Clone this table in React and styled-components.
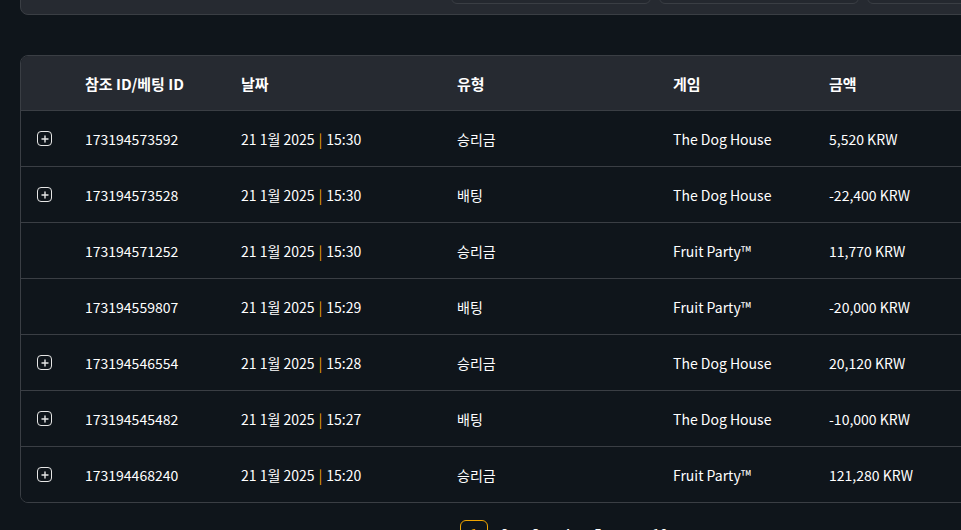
import React from 'react';
import styled, { createGlobalStyle } from 'styled-components';

const colors = {
  page: '#0f151b',
  panel: '#262a31',
  line: '#3a3e44',
  text: '#ffffff',
  accent: '#f0a500',
};

const GlobalStyle = createGlobalStyle`
  html, body {
    margin: 0;
    padding: 0;
    background: ${colors.page};
    overflow: hidden;
  }
  body {
    font-family: 'Noto Sans CJK KR', 'Noto Sans', sans-serif;
    color: ${colors.text};
  }
`;

const Page = styled.div`
  padding-left: 20px;
  width: 1160px;
`;

const FilterPanel = styled.div`
  margin-top: -69px;
  height: 84px;
  box-sizing: border-box;
  background: ${colors.panel};
  border: 1px solid ${colors.line};
  border-radius: 8px;
  display: flex;
  align-items: flex-end;
  padding: 0 0 10px 430px;
  gap: 8px;
`;

const FilterInput = styled.div`
  width: 200px;
  height: 40px;
  box-sizing: border-box;
  border: 1px solid ${colors.line};
  border-radius: 6px;
  background: #24282f;
`;

const Table = styled.div`
  margin-top: 40px;
  border: 1px solid ${colors.line};
  border-radius: 8px;
  overflow: hidden;
`;

const Row = styled.div`
  display: grid;
  grid-template-columns: 64px 156px 216px 216px 156px 1fr;
  align-items: center;
  height: ${p => (p.$head ? '54px' : '55px')};
  background: ${p => (p.$head ? colors.panel : colors.page)};
  border-bottom: 1px solid ${colors.line};
  font-size: ${p => (p.$head ? '15px' : '14px')};
  font-weight: ${p => (p.$head ? 700 : 400)};

  &:last-child {
    border-bottom: none;
  }
`;

const Cell = styled.div`
  white-space: nowrap;
  line-height: 20px;
  padding-top: 1px;
`;

const IconCell = styled.div`
  padding-left: 16px;
  display: flex;
  align-items: center;
`;

const ExpandBox = styled.span`
  width: 15px;
  height: 15px;
  border: 1.2px solid #e6e6e6;
  border-radius: 4px;
  display: flex;
  align-items: center;
  justify-content: center;
  box-sizing: border-box;
`;

const Sep = styled.span`
  color: ${colors.accent};
  margin: 0 4px;
`;

const Pagination = styled.div`
  display: flex;
  align-items: flex-start;
  gap: 3px;
  margin-top: 17px;
  padding-left: 409px;
  font-size: 14px;
`;

const PageItem = styled.div`
  width: 28px;
  height: 28px;
  box-sizing: border-box;
  display: flex;
  align-items: center;
  justify-content: center;
  padding-bottom: 3px;
  border-radius: 6px;
  border: 1px solid ${p => (p.$active ? colors.accent : 'transparent')};
  color: ${p => (p.$active ? colors.accent : colors.text)};
`;

const rows = [
  { id: '173194573592', time: '15:30', type: '승리금', game: 'The Dog House', amount: '5,520 KRW', expand: true },
  { id: '173194573528', time: '15:30', type: '배팅', game: 'The Dog House', amount: '-22,400 KRW', expand: true },
  { id: '173194571252', time: '15:30', type: '승리금', game: 'Fruit Party™', amount: '11,770 KRW', expand: false },
  { id: '173194559807', time: '15:29', type: '배팅', game: 'Fruit Party™', amount: '-20,000 KRW', expand: false },
  { id: '173194546554', time: '15:28', type: '승리금', game: 'The Dog House', amount: '20,120 KRW', expand: true },
  { id: '173194545482', time: '15:27', type: '배팅', game: 'The Dog House', amount: '-10,000 KRW', expand: true },
  { id: '173194468240', time: '15:20', type: '승리금', game: 'Fruit Party™', amount: '121,280 KRW', expand: true },
];

function PlusIcon() {
  return (
    <svg width="8" height="8" viewBox="0 0 8 8">
      <path d="M4 1v6M1 4h6" stroke="#e6e6e6" strokeWidth="1.4" strokeLinecap="round" />
    </svg>
  );
}

export default function App() {
  return (
    <Page>
      <GlobalStyle />
      <FilterPanel>
        <FilterInput />
        <FilterInput />
        <FilterInput />
      </FilterPanel>

      <Table>
        <Row $head>
          <Cell />
          <Cell>참조 ID/베팅 ID</Cell>
          <Cell>날짜</Cell>
          <Cell>유형</Cell>
          <Cell>게임</Cell>
          <Cell>금액</Cell>
        </Row>
        {rows.map(r => (
          <Row key={r.id}>
            <IconCell>
              {r.expand && (
                <ExpandBox>
                  <PlusIcon />
                </ExpandBox>
              )}
            </IconCell>
            <Cell>{r.id}</Cell>
            <Cell>
              21 1월 2025<Sep>|</Sep>{r.time}
            </Cell>
            <Cell>{r.type}</Cell>
            <Cell>{r.game}</Cell>
            <Cell>{r.amount}</Cell>
          </Row>
        ))}
      </Table>

      <Pagination>
        <PageItem>‹</PageItem>
        <PageItem $active>1</PageItem>
        <PageItem>2</PageItem>
        <PageItem>3</PageItem>
        <PageItem>4</PageItem>
        <PageItem>5</PageItem>
        <PageItem>…</PageItem>
        <PageItem>10</PageItem>
        <PageItem>›</PageItem>
      </Pagination>
    </Page>
  );
}
